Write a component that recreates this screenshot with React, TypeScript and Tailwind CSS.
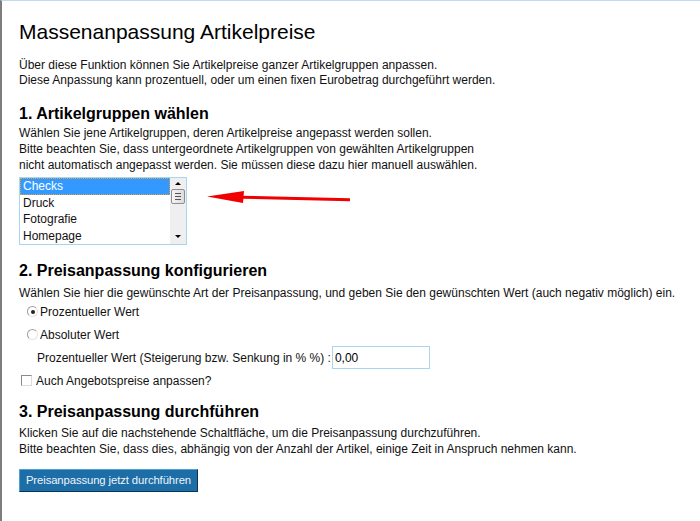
import React from 'react';

const groups = ['Checks', 'Druck', 'Fotografie', 'Homepage'];

function Radio({ checked }: { checked?: boolean }) {
  return (
    <span className="relative inline-flex h-[11px] w-[11px] items-center justify-center rounded-full border border-[#a0a0a0] border-b-[#e4e4e4] border-r-[#e4e4e4] bg-white">
      {checked && <span className="h-[4px] w-[4px] rounded-full bg-[#222]" />}
    </span>
  );
}

export default function App() {
  return (
    <div
      className="relative h-[521px] w-[700px] overflow-hidden border-l-2 border-t border-l-[#7d7d7d] border-t-[#bcdcee] bg-white pl-[17px] pt-[19px] text-[12px] text-[#111]"
      style={{ fontFamily: '"Liberation Sans", Arial, sans-serif' }}
    >
      <h1 className="text-[21px] leading-[24px] text-black">Massenanpassung Artikelpreise</h1>
      <p className="mt-[14px] leading-[15px]">
        Über diese Funktion können Sie Artikelpreise ganzer Artikelgruppen anpassen.
        <br />
        Diese Anpassung kann prozentuell, oder um einen fixen Eurobetrag durchgeführt werden.
      </p>

      <h2 className="mt-[16px] text-[16px] font-bold leading-[20px] text-black">1. Artikelgruppen wählen</h2>
      <p className="mt-[1px] leading-[16px]">
        Wählen Sie jene Artikelgruppen, deren Artikelpreise angepasst werden sollen.
        <br />
        Bitte beachten Sie, dass untergeordnete Artikelgruppen von gewählten Artikelgruppen
        <br />
        nicht automatisch angepasst werden. Sie müssen diese dazu hier manuell auswählen.
      </p>

      <div className="mt-[4px] flex h-[68px] w-[168px] border border-[#a9d5ef] bg-white">
        <div className="flex-1">
          {groups.map((g, i) => (
            <div
              key={g}
              className={
                i === 0
                  ? 'h-[16.5px] border border-dotted border-[#e0a040] bg-[#3399ff] pl-[2px] leading-[14.5px] text-white'
                  : 'h-[16.5px] pl-[3px] leading-[16.5px]'
              }
            >
              {g}
            </div>
          ))}
        </div>
        <div className="flex w-[16px] flex-col items-center bg-[#efefef]">
          <span className="mt-[4px] h-0 w-0 border-x-[3px] border-b-[3px] border-x-transparent border-b-black" />
          <div className="mt-[4px] flex h-[15px] w-[14px] flex-col items-center justify-center gap-[2px] rounded-[2px] border border-[#8f8f8f] bg-gradient-to-r from-[#f4f4f4] to-[#dcdcdc]">
            <span className="h-px w-[6px] bg-[#555]" />
            <span className="h-px w-[6px] bg-[#555]" />
            <span className="h-px w-[6px] bg-[#555]" />
          </div>
          <span className="mt-auto mb-[6px] h-0 w-0 border-x-[3px] border-t-[3px] border-x-transparent border-t-black" />
        </div>
      </div>

      <svg className="absolute left-[200px] top-[185px]" width="155" height="22" viewBox="200 185 155 22">
        <line x1="240" y1="196.2" x2="348" y2="198.8" stroke="#f00000" strokeWidth="3" />
        <polygon points="205,195.5 242,190 241,202" fill="#f00000" />
      </svg>

      <h2 className="mt-[16px] text-[16px] font-bold leading-[20px] text-black">2. Preisanpassung konfigurieren</h2>
      <p className="mt-[4px] leading-[16px]">
        Wählen Sie hier die gewünschte Art der Preisanpassung, und geben Sie den gewünschten Wert (auch negativ möglich) ein.
      </p>
      <div className="mt-[-1px] flex h-[23px] items-center gap-[2px] pl-[8px]">
        <Radio checked />
        <span>Prozentueller Wert</span>
      </div>
      <div className="flex h-[23px] items-center gap-[2px] pl-[8px]">
        <Radio />
        <span>Absoluter Wert</span>
      </div>
      <div className="flex h-[23px] items-center pl-[18px]">
        <span>Prozentueller Wert (Steigerung bzw. Senkung in % %) :</span>
        <span className="ml-[1px] flex h-[23px] w-[98px] items-center border border-[#a9d5ef] pl-[2px] text-black">0,00</span>
      </div>
      <div className="flex h-[23px] items-center gap-[4px] pl-[2px]">
        <span className="h-[11px] w-[11px] border border-[#8a8a8a] border-b-[#dcdcdc] border-r-[#dcdcdc] bg-white" />
        <span>Auch Angebotspreise anpassen?</span>
      </div>

      <h2 className="mt-[10px] text-[16px] font-bold leading-[20px] text-black">3. Preisanpassung durchführen</h2>
      <p className="mt-[3px] leading-[16px]">
        Klicken Sie auf die nachstehende Schaltfläche, um die Preisanpassung durchzuführen.
        <br />
        Bitte beachten Sie, dass dies, abhängig von der Anzahl der Artikel, einige Zeit in Anspruch nehmen kann.
      </p>
      <button className="mt-[12px] h-[23px] w-[179px] whitespace-nowrap border border-[#4aa3d6] border-b-[#0b3553] border-r-[#0b3553] bg-[#1d6ea6] px-0 text-[11.3px] tracking-[-0.1px] text-[#eef4fa]">
        Preisanpassung jetzt durchführen
      </button>
    </div>
  );
}
